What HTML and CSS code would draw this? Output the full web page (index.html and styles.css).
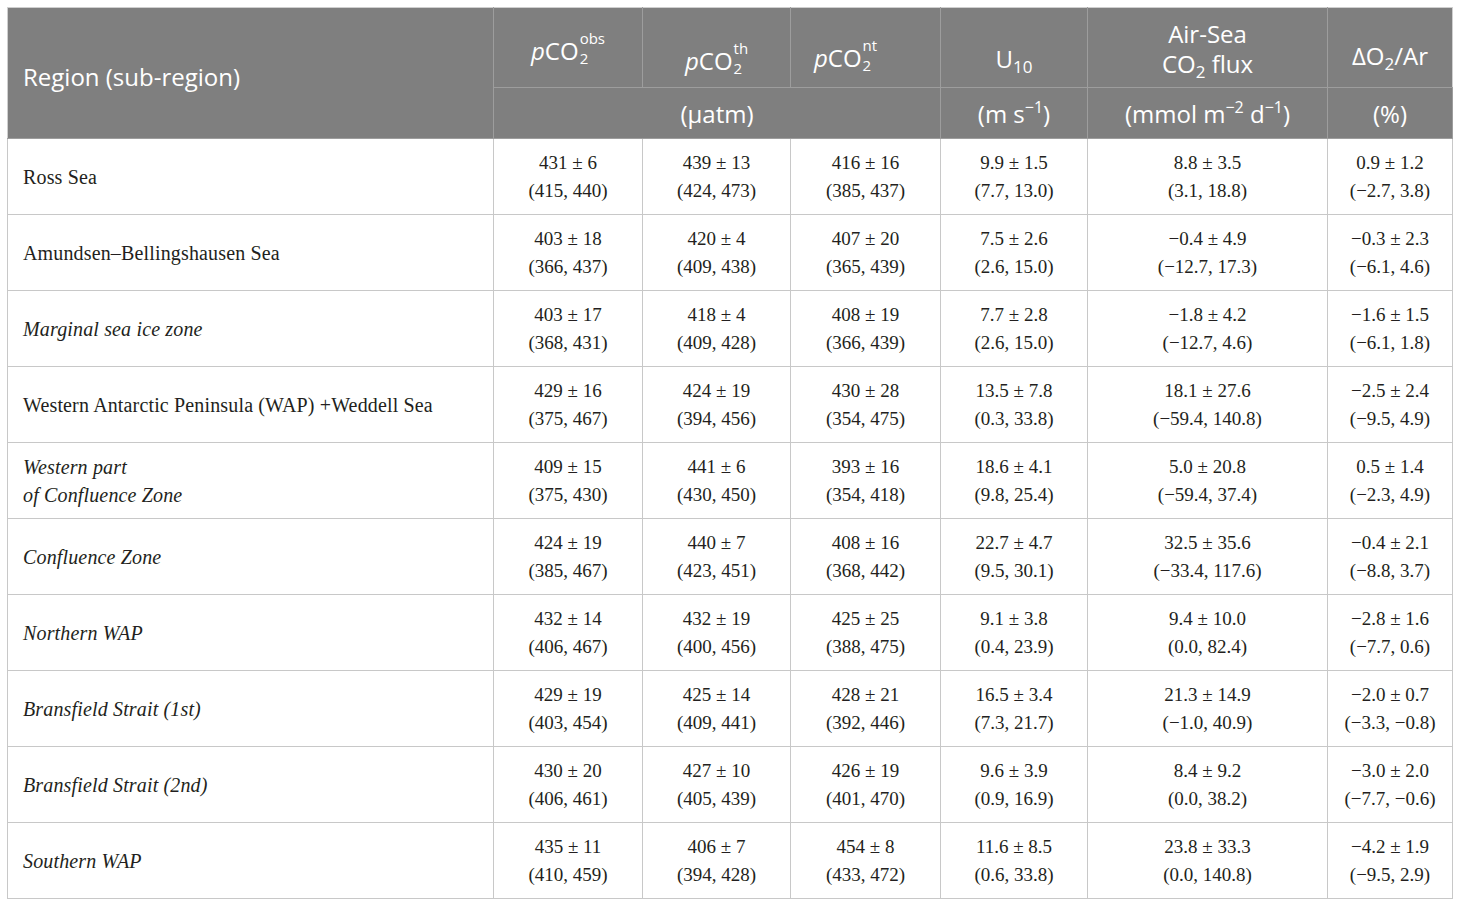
FILE: index.html
```html
<!DOCTYPE html>
<html>
<head>
  <title>Table</title>
  <meta charset="utf-8">
  <link rel="stylesheet" href="styles.css">
</head>
<body>
<div class="contenedor">
  <table class="tabla">
    <colgroup>
      <col class="c-region">
      <col class="c-obs">
      <col class="c-th">
      <col class="c-nt">
      <col class="c-u10">
      <col class="c-flux">
      <col class="c-o2">
    </colgroup>
    <thead>
      <tr class="head-1">
        <th rowspan="2" class="region">Region (sub-region)</th>
        <th class="h-obs"><span class="var">p</span>CO<span class="supsub"><span>obs</span><span>2</span></span></th>
        <th class="h-th"><span class="var">p</span>CO<span class="supsub"><span>th</span><span>2</span></span></th>
        <th class="h-nt"><span class="var">p</span>CO<span class="supsub"><span>nt</span><span>2</span></span></th>
        <th class="h-u">U<sub>10</sub></th>
        <th class="h-flux">Air-Sea<br>CO<sub>2</sub> flux</th>
        <th class="h-o2">ΔO<sub>2</sub>/Ar</th>
      </tr>
      <tr class="head-2">
        <th colspan="3">(µatm)</th>
        <th>(m s<sup>−1</sup>)</th>
        <th>(mmol m<sup>−2</sup> d<sup>−1</sup>)</th>
        <th>(%)</th>
      </tr>
    </thead>
    <tbody>
      <tr>
        <td class="region">Ross Sea</td>
        <td>431 ± 6<br>(415, 440)</td>
        <td>439 ± 13<br>(424, 473)</td>
        <td>416 ± 16<br>(385, 437)</td>
        <td>9.9 ± 1.5<br>(7.7, 13.0)</td>
        <td>8.8 ± 3.5<br>(3.1, 18.8)</td>
        <td>0.9 ± 1.2<br>(−2.7, 3.8)</td>
      </tr>
      <tr>
        <td class="region">Amundsen–Bellingshausen Sea</td>
        <td>403 ± 18<br>(366, 437)</td>
        <td>420 ± 4<br>(409, 438)</td>
        <td>407 ± 20<br>(365, 439)</td>
        <td>7.5 ± 2.6<br>(2.6, 15.0)</td>
        <td>−0.4 ± 4.9<br>(−12.7, 17.3)</td>
        <td>−0.3 ± 2.3<br>(−6.1, 4.6)</td>
      </tr>
      <tr>
        <td class="region sub">Marginal sea ice zone</td>
        <td>403 ± 17<br>(368, 431)</td>
        <td>418 ± 4<br>(409, 428)</td>
        <td>408 ± 19<br>(366, 439)</td>
        <td>7.7 ± 2.8<br>(2.6, 15.0)</td>
        <td>−1.8 ± 4.2<br>(−12.7, 4.6)</td>
        <td>−1.6 ± 1.5<br>(−6.1, 1.8)</td>
      </tr>
      <tr>
        <td class="region">Western Antarctic Peninsula (WAP) +Weddell Sea</td>
        <td>429 ± 16<br>(375, 467)</td>
        <td>424 ± 19<br>(394, 456)</td>
        <td>430 ± 28<br>(354, 475)</td>
        <td>13.5 ± 7.8<br>(0.3, 33.8)</td>
        <td>18.1 ± 27.6<br>(−59.4, 140.8)</td>
        <td>−2.5 ± 2.4<br>(−9.5, 4.9)</td>
      </tr>
      <tr>
        <td class="region sub">Western part<br>of Confluence Zone</td>
        <td>409 ± 15<br>(375, 430)</td>
        <td>441 ± 6<br>(430, 450)</td>
        <td>393 ± 16<br>(354, 418)</td>
        <td>18.6 ± 4.1<br>(9.8, 25.4)</td>
        <td>5.0 ± 20.8<br>(−59.4, 37.4)</td>
        <td>0.5 ± 1.4<br>(−2.3, 4.9)</td>
      </tr>
      <tr>
        <td class="region sub">Confluence Zone</td>
        <td>424 ± 19<br>(385, 467)</td>
        <td>440 ± 7<br>(423, 451)</td>
        <td>408 ± 16<br>(368, 442)</td>
        <td>22.7 ± 4.7<br>(9.5, 30.1)</td>
        <td>32.5 ± 35.6<br>(−33.4, 117.6)</td>
        <td>−0.4 ± 2.1<br>(−8.8, 3.7)</td>
      </tr>
      <tr>
        <td class="region sub">Northern WAP</td>
        <td>432 ± 14<br>(406, 467)</td>
        <td>432 ± 19<br>(400, 456)</td>
        <td>425 ± 25<br>(388, 475)</td>
        <td>9.1 ± 3.8<br>(0.4, 23.9)</td>
        <td>9.4 ± 10.0<br>(0.0, 82.4)</td>
        <td>−2.8 ± 1.6<br>(−7.7, 0.6)</td>
      </tr>
      <tr>
        <td class="region sub">Bransfield Strait (1st)</td>
        <td>429 ± 19<br>(403, 454)</td>
        <td>425 ± 14<br>(409, 441)</td>
        <td>428 ± 21<br>(392, 446)</td>
        <td>16.5 ± 3.4<br>(7.3, 21.7)</td>
        <td>21.3 ± 14.9<br>(−1.0, 40.9)</td>
        <td>−2.0 ± 0.7<br>(−3.3, −0.8)</td>
      </tr>
      <tr>
        <td class="region sub">Bransfield Strait (2nd)</td>
        <td>430 ± 20<br>(406, 461)</td>
        <td>427 ± 10<br>(405, 439)</td>
        <td>426 ± 19<br>(401, 470)</td>
        <td>9.6 ± 3.9<br>(0.9, 16.9)</td>
        <td>8.4 ± 9.2<br>(0.0, 38.2)</td>
        <td>−3.0 ± 2.0<br>(−7.7, −0.6)</td>
      </tr>
      <tr>
        <td class="region sub">Southern WAP</td>
        <td>435 ± 11<br>(410, 459)</td>
        <td>406 ± 7<br>(394, 428)</td>
        <td>454 ± 8<br>(433, 472)</td>
        <td>11.6 ± 8.5<br>(0.6, 33.8)</td>
        <td>23.8 ± 33.3<br>(0.0, 140.8)</td>
        <td>−4.2 ± 1.9<br>(−9.5, 2.9)</td>
      </tr>
    </tbody>
  </table>
</div>
</body>
</html>
```

FILE: styles.css
```css
body {
  margin: 0;
  background: white;
}

.contenedor {
  padding: 7px 8px 8px 7px;
}

.tabla {
  width: 1446px;
  border-collapse: collapse;
  table-layout: fixed;
}

.c-region { width: 486px; }
.c-obs { width: 149px; }
.c-th { width: 148px; }
.c-nt { width: 150px; }
.c-u10 { width: 147px; }
.c-flux { width: 240px; }
.c-o2 { width: 125px; }

/* cabecera gris */
.tabla th {
  background-color: #7f7f7f;
  color: white;
  font-family: "Open Sans", "Noto Sans", sans-serif;
  font-weight: normal;
  font-size: 24px;
  line-height: 29px;
  text-align: center;
  border: 1px solid #9d9d9d;
  padding: 0 4px;
}

.tabla .head-1 th {
  height: 80px;
  box-sizing: border-box;
  vertical-align: top;
}

.tabla .head-2 th {
  height: 51px;
  box-sizing: border-box;
}

.tabla .head-1 th.region {
  text-align: left;
  vertical-align: middle;
  padding: 6px 0 0 15px;
  border-top-color: #cfcfcf;
  border-left-color: #cfcfcf;
}

.tabla .head-1 .h-obs { padding-top: 20px; border-top-color: #cfcfcf; }
.tabla .head-1 .h-th { padding-top: 30px; border-top-color: #cfcfcf; }
.tabla .head-1 .h-nt { padding-top: 27px; padding-right: 44px; border-top-color: #cfcfcf; }
.tabla .head-1 .h-u { padding-top: 36px; border-top-color: #cfcfcf; }
.tabla .head-1 .h-flux { padding-top: 11px; line-height: 30px; border-top-color: #cfcfcf; }
.tabla .head-1 .h-o2 { padding-top: 33px; border-top-color: #cfcfcf; border-right-color: #cfcfcf; }

.tabla th sub {
  font-size: 17px;
  line-height: 0;
  vertical-align: -5px;
}

.tabla th sup {
  font-size: 16px;
  line-height: 0;
  vertical-align: 10px;
}

.var {
  font-style: italic;
}

.supsub {
  display: inline-block;
  vertical-align: -4px;
  font-size: 15px;
  line-height: 20px;
  text-align: left;
  margin-left: 1px;
}

.supsub span {
  display: block;
}

/* cuerpo */
.tabla td {
  font-family: "Liberation Serif", "Times New Roman", serif;
  font-size: 19px;
  line-height: 28px;
  color: #231f20;
  text-align: center;
  border: 1px solid #c8c8c8;
  height: 76px;
  box-sizing: border-box;
  padding: 0 4px;
}

.tabla td.region {
  text-align: left;
  padding-left: 15px;
  font-size: 20px;
  letter-spacing: 0.15px;
}

.tabla td.sub {
  font-style: italic;
}
```
